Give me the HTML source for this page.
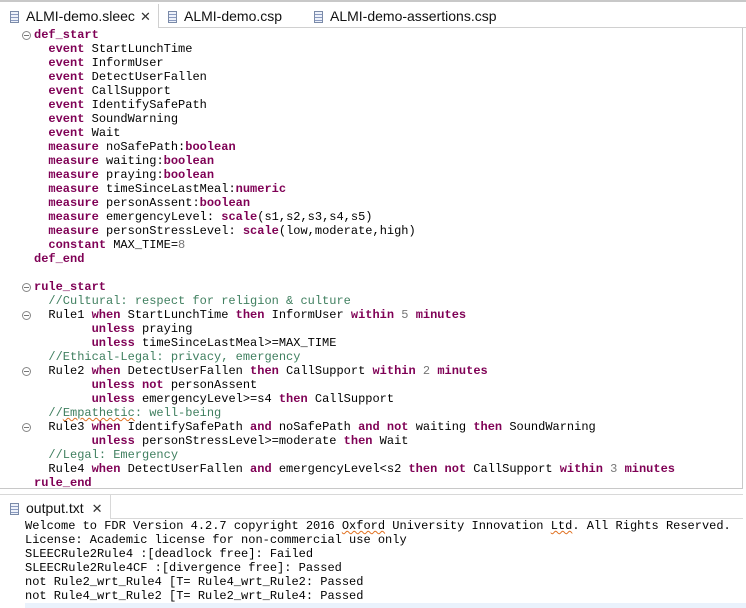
<!DOCTYPE html>
<html><head><meta charset="utf-8"><style>
body{margin:0;width:746px;height:608px;background:#fff;position:relative;overflow:hidden;font-family:"Liberation Sans",sans-serif}
.tabs{position:absolute;left:0;top:0;width:746px;height:28px;border-top:2px solid #c8c8c8;box-sizing:border-box}
.tabline{position:absolute;left:158px;top:27px;width:588px;height:1px;background:#d0d0d0}
.tab{position:absolute;top:3px;height:26px;font-size:14px;line-height:26px;color:#111}
.ic{display:inline-block;width:9px;height:12px;border:1px solid #7a8aa8;background:#eef2fa;vertical-align:-2px;margin-right:7px;box-sizing:border-box;background-image:repeating-linear-gradient(#eef2fa 0 2px,#8a9ac0 2px 3px)}
.x{margin-left:5px;font-weight:normal;color:#333;font-size:13px}
.sep{position:absolute;top:4px;width:1px;height:24px;background:#d0d0d0}
pre{margin:0;position:absolute;font-family:"Liberation Mono",monospace;font-size:12px;line-height:14px;color:#000}
.k{color:#7f0055;font-weight:bold}.c{color:#3f7f5f}.n{color:#777}
.g{position:absolute;left:22px;width:9px;height:9px;border:1px solid #888;border-radius:50%;box-sizing:border-box}
.g:after{content:"";position:absolute;left:1px;right:1px;top:3px;height:1px;background:#777}
.ed{position:absolute;left:0;top:28px;width:743px;height:461px;border-right:1px solid #c8c8c8;border-bottom:1px solid #c8c8c8;box-sizing:border-box}
.sq{text-decoration:underline wavy #e07020;text-decoration-thickness:1px}
</style></head><body>
<div class="tabs"></div><div class="tabline"></div>
<div class="tab" style="left:10px"><span class="ic"></span>ALMI-demo.sleec<span class="x">✕</span></div>
<div class="sep" style="left:158px"></div>
<div class="tab" style="left:168px"><span class="ic"></span>ALMI-demo.csp</div>
<div class="tab" style="left:314px"><span class="ic"></span>ALMI-demo-assertions.csp</div>
<div class="ed"></div>
<div class="g" style="top:31px"></div>
<div class="g" style="top:283px"></div>
<div class="g" style="top:311px"></div>
<div class="g" style="top:367px"></div>
<div class="g" style="top:423px"></div>
<pre style="left:34px;top:28px"><span class="k">def_start</span>
  <span class="k">event</span> StartLunchTime
  <span class="k">event</span> InformUser
  <span class="k">event</span> DetectUserFallen
  <span class="k">event</span> CallSupport
  <span class="k">event</span> IdentifySafePath
  <span class="k">event</span> SoundWarning
  <span class="k">event</span> Wait
  <span class="k">measure</span> noSafePath:<span class="k">boolean</span>
  <span class="k">measure</span> waiting:<span class="k">boolean</span>
  <span class="k">measure</span> praying:<span class="k">boolean</span>
  <span class="k">measure</span> timeSinceLastMeal:<span class="k">numeric</span>
  <span class="k">measure</span> personAssent:<span class="k">boolean</span>
  <span class="k">measure</span> emergencyLevel: <span class="k">scale</span>(s1,s2,s3,s4,s5)
  <span class="k">measure</span> personStressLevel: <span class="k">scale</span>(low,moderate,high)
  <span class="k">constant</span> MAX_TIME=<span class="n">8</span>
<span class="k">def_end</span>

<span class="k">rule_start</span>
  <span class="c">//Cultural: respect for religion &amp; culture</span>
  Rule1 <span class="k">when</span> StartLunchTime <span class="k">then</span> InformUser <span class="k">within</span> <span class="n">5</span> <span class="k">minutes</span>
        <span class="k">unless</span> praying
        <span class="k">unless</span> timeSinceLastMeal&gt;=MAX_TIME
  <span class="c">//Ethical-Legal: privacy, emergency</span>
  Rule2 <span class="k">when</span> DetectUserFallen <span class="k">then</span> CallSupport <span class="k">within</span> <span class="n">2</span> <span class="k">minutes</span>
        <span class="k">unless</span> <span class="k">not</span> personAssent
        <span class="k">unless</span> emergencyLevel&gt;=s4 <span class="k">then</span> CallSupport
  <span class="c">//<span class="sq">Empathetic</span>: well-being</span>
  Rule3 <span class="k">when</span> IdentifySafePath <span class="k">and</span> noSafePath <span class="k">and</span> <span class="k">not</span> waiting <span class="k">then</span> SoundWarning
        <span class="k">unless</span> personStressLevel&gt;=moderate <span class="k">then</span> Wait
  <span class="c">//Legal: Emergency</span>
  Rule4 <span class="k">when</span> DetectUserFallen <span class="k">and</span> emergencyLevel&lt;s2 <span class="k">then</span> <span class="k">not</span> CallSupport <span class="k">within</span> <span class="n">3</span> <span class="k">minutes</span>
<span class="k">rule_end</span></pre>
<div style="position:absolute;left:0;top:494px;width:743px;height:1px;background:#d8d8d8"></div>
<div style="position:absolute;left:110px;top:518px;width:633px;height:1px;background:#d8d8d8"></div>
<div style="position:absolute;left:110px;top:495px;width:1px;height:23px;background:#d8d8d8"></div>
<div class="tab" style="left:10px;top:496px;height:24px;line-height:24px"><span class="ic"></span>output.txt<span class="x" style="margin-left:8px">✕</span></div>
<div style="position:absolute;left:25px;top:603px;width:721px;height:5px;background:#eaf2fc"></div>
<pre style="left:25px;top:519px">Welcome to FDR Version 4.2.7 copyright 2016 <span class="sq">Oxford</span> University Innovation <span class="sq">Ltd</span>. All Rights Reserved.
License: Academic license for non-commercial use only
SLEECRule2Rule4 :[deadlock free]: Failed
SLEECRule2Rule4CF :[divergence free]: Passed
not Rule2_wrt_Rule4 [T= Rule4_wrt_Rule2: Passed
not Rule4_wrt_Rule2 [T= Rule2_wrt_Rule4: Passed</pre>
</body></html>
